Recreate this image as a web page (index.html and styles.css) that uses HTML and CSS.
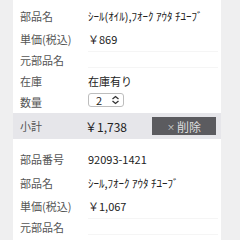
FILE: index.html
```html
<!DOCTYPE html>
<html lang="ja">
<head>
<meta charset="UTF-8">
<meta name="viewport" content="width=device-width, initial-scale=1.0">
<title>カート</title>
<link rel="stylesheet" href="styles.css">
</head>
<body>
<div id="cart">
    <div class="item first">
        <div class="row tall"><div class="label">部品名</div><div class="value kana">ｼｰﾙ(ｵｲﾙ),ﾌｵｰｸ ｱｳﾀ ﾁﾕｰﾌﾞ</div></div>
        <div class="row"><div class="label">単価(税込)</div><div class="value">￥869</div></div>
        <div class="row"><div class="label">元部品名</div><div class="value empty"></div></div>
        <div class="row"><div class="label">在庫</div><div class="value">在庫有り</div></div>
        <div class="row">
            <div class="label">数量</div>
            <div class="value">
                <div class="qty">
                    <span>2</span>
                    <svg width="9" height="10" viewBox="0 0 9 10"><path d="M1.5 4 L4.5 1.5 L7.5 4 M1.5 6 L4.5 8.5 L7.5 6" fill="none" stroke="#333" stroke-width="1.3"/></svg>
                </div>
            </div>
        </div>
        <div class="subtotal">
            <div class="label">小計</div>
            <div class="sum">￥1,738</div>
            <div class="delete" onclick="this.parentNode.parentNode.remove()"><span class="x">×</span>削除</div>
        </div>
    </div>
    <div class="item">
        <div class="row tall"><div class="label">部品番号</div><div class="value">92093-1421</div></div>
        <div class="row tall"><div class="label">部品名</div><div class="value kana">ｼｰﾙ,ﾌｵｰｸ ｱｳﾀ ﾁﾕｰﾌﾞ</div></div>
        <div class="row"><div class="label">単価(税込)</div><div class="value">￥1,067</div></div>
        <div class="row"><div class="label">元部品名</div><div class="value empty"></div></div>
        <div class="row"><div class="label">在庫</div><div class="value">在庫有り</div></div>
    </div>
</div>
</body>
</html>
```

FILE: styles.css
```css
body {
    margin: 0;
    background-color: #efeff0;
    font-family: "Noto Sans CJK JP", "Noto Sans", sans-serif;
    font-size: 11px;
    color: #222;
    height: 240px;
    overflow: hidden;
}
#cart {
    margin-left: 13px;
    width: 208px;
    min-height: 260px;
    background-color: #ffffff;
}
.item {
    padding-top: 8px;
}
.item.first {
    padding-top: 4px;
}
.row {
    display: grid;
    grid-template-columns: 68px 1fr;
    align-items: center;
    height: 21px;
    padding-left: 7px;
}
.row.tall {
    height: 24px;
}
.label {
    color: #555;
}
.value {
    color: #222;
}
.kana {
    font-size: 11px;
    white-space: nowrap;
}
.empty {
    height: 15px;
    margin-right: 3px;
    border-top: 1px solid #f5f5f5;
    border-bottom: 1px solid #f5f5f5;
}
.qty {
    display: flex;
    align-items: center;
    justify-content: space-between;
    width: 36px;
    height: 14px;
    padding: 0 3px 0 7px;
    box-sizing: border-box;
    border: 1px solid #bdbdbd;
    border-radius: 3px;
    margin-top: -3px;
    font-size: 11px;
}
.qty svg {
    display: block;
}
.subtotal {
    display: flex;
    align-items: center;
    height: 26px;
    margin-top: 1px;
    padding-left: 7px;
    background-color: #e6e6ea;
}
.subtotal .label {
    width: 65px;
}
.sum {
    font-size: 12px;
    flex: 1;
}
.delete {
    display: flex;
    justify-content: center;
    align-items: center;
    width: 64px;
    height: 18px;
    margin-right: 5px;
    font-size: 12px;
    color: #dedede;
    background-color: #5b5b5f;
    cursor: pointer;
}
.delete .x {
    font-size: 8px;
    margin-right: 2px;
}
```
